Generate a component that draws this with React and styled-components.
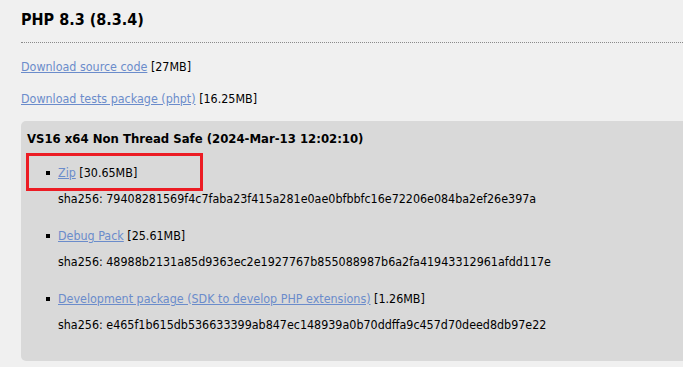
import styled, { createGlobalStyle } from "styled-components";

const GlobalStyle = createGlobalStyle`
  html, body {
    margin: 0;
    padding: 0;
    background: #f0f0f0;
    overflow: hidden;
  }
  body {
    font-family: "DejaVu Sans Condensed", "DejaVu Sans", sans-serif;
    font-stretch: condensed;
    font-size: 12.4px;
    color: #000;
  }
`;

const files = [
  {
    name: "Zip",
    size: "30.65MB",
    sha: "79408281569f4c7faba23f415a281e0ae0bfbbfc16e72206e084ba2ef26e397a",
    marked: true,
  },
  {
    name: "Debug Pack",
    size: "25.61MB",
    sha: "48988b2131a85d9363ec2e1927767b855088987b6a2fa41943312961afdd117e",
  },
  {
    name: "Development package (SDK to develop PHP extensions)",
    size: "1.26MB",
    sha: "e465f1b615db536633399ab847ec148939a0b70ddffa9c457d70deed8db97e22",
  },
];

function App() {
  return (
    <Page>
      <GlobalStyle />
      <Heading>PHP 8.3 (8.3.4)</Heading>
      <Line>
        <Link href="#">Download source code</Link> [27MB]
      </Line>
      <Line>
        <Link href="#">Download tests package (phpt)</Link> [16.25MB]
      </Line>
      <BuildBox>
        <BuildTitle>VS16 x64 Non Thread Safe (2024-Mar-13 12:02:10)</BuildTitle>
        <FileList>
          {files.map((f) => (
            <FileItem key={f.name}>
              <FileLine>
                {f.marked && <Marker />}
                <Link href="#">{f.name}</Link> [{f.size}]
              </FileLine>
              <Sha>sha256: {f.sha}</Sha>
            </FileItem>
          ))}
        </FileList>
      </BuildBox>
    </Page>
  );
}

const Page = styled.div`
  padding-left: 21px;
`;

const Heading = styled.h3`
  margin: 0;
  padding: 10px 0 12px 0;
  font-size: 16px;
  line-height: 20px;
  font-weight: bold;
  border-bottom: 1px dotted #8a8a8a;
`;

const Line = styled.p`
  margin: 16px 0 0 0;
  line-height: 16px;
`;

const Link = styled.a`
  color: #6b8ccb;
  text-decoration: underline;
`;

const BuildBox = styled.div`
  margin-top: 14px;
  padding: 10px 0 28px 6px;
  background: #d9d9d9;
  border-radius: 5px 0 0 5px;
`;

const BuildTitle = styled.h4`
  margin: 0;
  font-size: 13px;
  line-height: 16px;
  font-weight: bold;
`;

const FileList = styled.ul`
  list-style: none;
  margin: 18px 0 0 0;
  padding: 0 0 0 31px;
`;

const FileItem = styled.li`
  margin-bottom: 21px;
  &:last-child {
    margin-bottom: 0;
  }
`;

const FileLine = styled.div`
  position: relative;
  line-height: 16px;
  &::before {
    content: "";
    position: absolute;
    left: -12px;
    top: 6px;
    width: 4px;
    height: 4px;
    background: #000;
  }
`;

const Marker = styled.span`
  position: absolute;
  left: -32px;
  top: -12px;
  width: 171px;
  height: 32px;
  border: 3px solid #ec1c24;
`;

const Sha = styled.p`
  margin: 10px 0 0 0;
  line-height: 16px;
`;

export default App;
